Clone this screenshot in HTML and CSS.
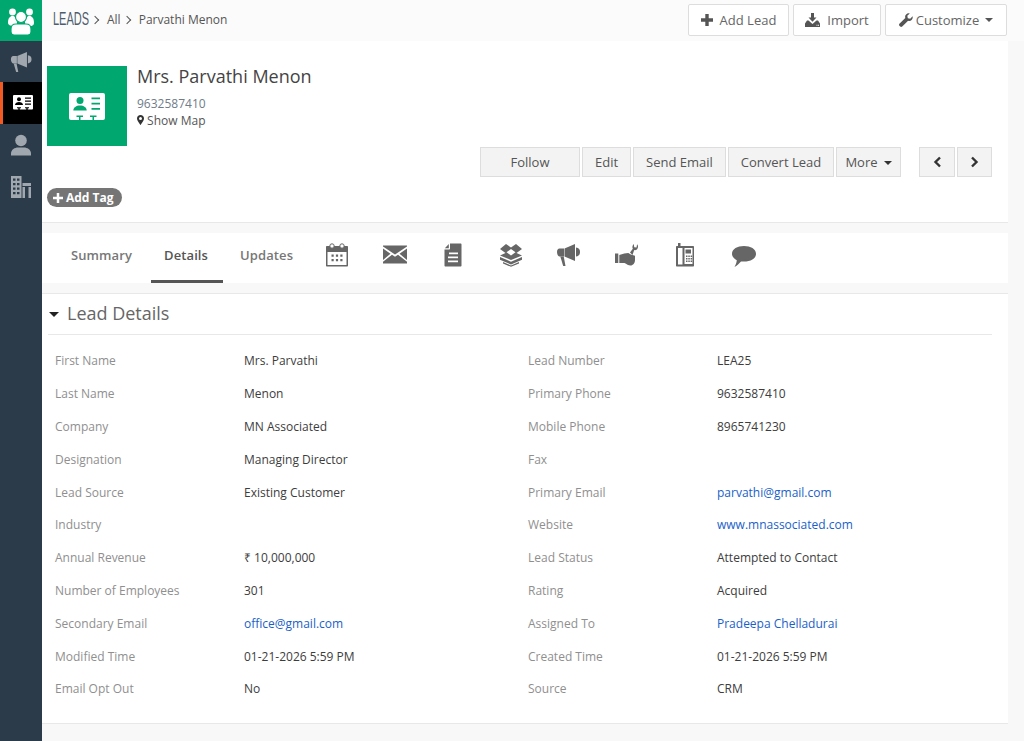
FILE: index.html
```html
<!DOCTYPE html>
<html lang="en">
<head>
<meta charset="utf-8">
<title>Lead Details</title>
<link rel="stylesheet" href="styles.css">
</head>
<body>
<div class="app">
  <nav class="side">
    <div class="side-item logo">
      <svg width="30" height="28" viewBox="0 0 30 28"><g fill="#fff"><circle cx="6.500" cy="5" r="3.400"/><circle cx="23.500" cy="5" r="3.400"/><path d="M2 16c0-5 2-7 4.500-7S11 11 11 16 2 19 2 16zM19 16c0-5 2-7 4.500-7s4.500 2 4.500 7-9 3-9 0z"/><circle cx="15" cy="10" r="5.500" stroke="#00a86f" stroke-width="1.200"/><path d="M5 25v-3c0-3 2-5 5-5h10c3 0 5 2 5 5v3c0 2-1.500 3-3 3H8c-1.500 0-3-1-3-3z" stroke="#00a86f" stroke-width="1.200"/></g></svg>
    </div>
    <div class="side-item">
      <svg width="22" height="22" viewBox="0 0 23 24"><path fill="#a0a7ae" d="M.5 9c0-2 1-3.500 2.500-3.500h4v8H3C1.500 13.500.5 11 .5 9zM7.500 5.500L18 1v17L7.500 13.500zM19 4.500c3 .5 4 2 4 4.500s-1 4-4 4.500z"/><path fill="#a0a7ae" d="M3.500 13.500h3.200L8.500 23H6.200z"/></svg>
    </div>
    <div class="side-item active">
      <svg width="20" height="16" viewBox="0 0 20 16"><rect width="20" height="14.500" rx="1" fill="#fff"/><circle cx="6" cy="4.300" r="2" fill="#000"/><path d="M2 10c0-2 2-3 4-3s4 1 4 3z" fill="#000"/><path d="M12 2.500h6v1.300h-6zM12 5.500h6v1.300h-6zM12 8.500h6v1.300h-6zM4 12.200h4v1.100H4zM12 12.200h4v1.100h-4z" fill="#000"/><path d="M5.300 13h1.400v3H5.300zM13.300 13h1.400v3h-1.400z" fill="#000"/></svg>
    </div>
    <div class="side-item">
      <svg width="22" height="22" viewBox="0 0 22 22"><circle cx="11" cy="6.500" r="5.800" fill="#a0a7ae"/><path d="M1 21.500v-2c0-4 4-6 7-6h6c3 0 7 2 7 6v2z" fill="#a0a7ae"/></svg>
    </div>
    <div class="side-item">
      <svg width="20" height="22" viewBox="0 0 20 22"><path fill-rule="evenodd" fill="#a0a7ae" d="M0 0h10.500v22H0zM2 2.500v2.300h2.500V2.500zm4 0v2.300h2.500V2.500zM2 7v2.300h2.500V7zm4 0v2.300h2.500V7zM2 11.500v2.300h2.500v-2.300zm4 0v2.300h2.500v-2.300zM2 16v2.300h2.500V16zm4 0v2.300h2.500V16z"/><path fill="#a0a7ae" d="M11.500 7H20v3h-8.500zM11.500 11H14v11h-2.500zM17.500 11H20v11h-2.500z"/></svg>
    </div>
  </nav>

  <div class="content">
    <header class="topbar">
      <div class="crumbs">
        <span class="module">LEADS</span>
        <span class="sep"></span>
        <span>All</span>
        <span class="sep"></span>
        <span>Parvathi Menon</span>
      </div>
      <div class="top-actions">
        <button class="top-btn add"><svg class="ic" width="12" height="12" viewBox="0 0 12 12"><path fill="#555" d="M4.300 0h3.400v4.300H12v3.400H7.700V12H4.300V7.700H0V4.300h4.300z"/></svg><span>Add Lead</span></button>
        <button class="top-btn imp"><svg class="ic" width="15" height="14" viewBox="0 0 15 14"><path fill="#555" d="M6 0h3v4.500h2.500L7.500 8.800 3.500 4.500H6z"/><path fill-rule="evenodd" fill="#555" d="M2 7.500h1.500l4 3.500 4-3.500H13l2 3V14H0v-3.500zM11.500 11.800v1h1v-1zm1.500 0v1h1v-1z"/></svg><span>Import</span></button>
        <button class="top-btn cust"><svg class="ic" width="14" height="14" viewBox="0 0 14 14"><path fill="#555" d="M13.600 3.300c.3 1.300 0 2.700-1 3.600-1 1-2.300 1.200-3.500.8L3.200 13.600c-.6.500-1.400.5-2 0l-.8-.8c-.5-.6-.5-1.400 0-2l5.900-5.900c-.4-1.200-.2-2.500.8-3.500 1-1 2.300-1.300 3.600-1L8.300 2.800l.5 2.400 2.400.5z"/></svg><span>Customize</span><i class="caret"></i></button>
      </div>
    </header>

    <div class="page">
      <section class="record">
        <div class="rec-head">
          <div class="avatar">
            <svg width="36" height="27" viewBox="0 0 36 27"><rect width="36" height="27" rx="2" fill="#fff"/><circle cx="11" cy="7.500" r="3.500" fill="#00a86f"/><path d="M4.300 17.500c0-3 3-5 6.700-5s6.700 2 6.700 5z" fill="#00a86f"/><path d="M22.500 4.500H31v1.800h-8.500zM22.500 9.700H31v1.800h-8.500zM22.500 15H31v1.800h-8.500zM7.500 22.500H14v1.500H7.500zM21 22.500h6.500V24H21z" fill="#00a86f"/><path d="M10 23.500h1.500V27H10zM23.500 23.500H25V27h-1.500z" fill="#00a86f"/></svg>
          </div>
          <div class="rec-info">
            <h1 class="rec-name">Mrs. Parvathi Menon</h1>
            <div class="rec-phone">9632587410</div>
            <div class="rec-map"><svg width="7" height="10" viewBox="0 0 7 10"><path fill-rule="evenodd" fill="#333" d="M3.500 0C1.500 0 0 1.500 0 3.400 0 5.500 3.500 10 3.500 10S7 5.500 7 3.400C7 1.500 5.500 0 3.500 0zm0 2a1.500 1.500 0 1 1 0 3 1.500 1.500 0 0 1 0-3z"/></svg> Show Map</div>
          </div>
        </div>
        <div class="rec-actions">
          <button class="act follow">Follow</button>
          <button class="act edit">Edit</button>
          <button class="act mail">Send Email</button>
          <button class="act conv">Convert Lead</button>
          <button class="act more">More<i class="caret dark"></i></button>
          <button class="act nav first"><svg width="9" height="12" viewBox="0 0 9 12"><path fill="none" stroke="#333" stroke-width="2.400" d="M7 1.500L2.500 6 7 10.500"/></svg></button>
          <button class="act nav"><svg width="9" height="12" viewBox="0 0 9 12"><path fill="none" stroke="#333" stroke-width="2.400" d="M2 1.500L6.500 6 2 10.500"/></svg></button>
        </div>
        <div class="tagrow"><span class="tag"><svg width="10" height="10" viewBox="0 0 12 12"><path fill="#fff" d="M4.500 0h3v4.500H12v3H7.500V12h-3V7.500H0v-3h4.500z"/></svg>Add Tag</span></div>
      </section>

      <nav class="tabs">
        <a class="tab">Summary</a>
        <a class="tab current">Details</a>
        <a class="tab">Updates</a>
        <span class="tab-icons">
          <svg width="24" height="24" viewBox="0 0 24 24"><path fill="#666" fill-rule="evenodd" d="M2 3h20c.6 0 1 .4 1 1v18.500c0 .6-.4 1-1 1H2c-.6 0-1-.4-1-1V4c0-.6.4-1 1-1zm.5 6v13h19V9zM6.500 11.500h2.200v2.200H6.500zm4.400 0h2.200v2.200h-2.200zm4.400 0h2.200v2.200h-2.200zM6.500 16h2.200v2.200H6.500zm4.400 0h2.200v2.200h-2.200zm4.400 0h2.200v2.200h-2.200z"/><circle cx="7" cy="3" r="2.200" fill="#fff" stroke="#666"/><circle cx="17" cy="3" r="2.200" fill="#fff" stroke="#666"/></svg>
          <svg width="24" height="24" viewBox="0 1.500 24 24"><path fill="#666" d="M0 4h24v1L12 13 0 5zM0 7l7.500 5.200L0 18.500zM24 7v11.500l-7.500-6.300zM9 13.300l3 2 3-2 9 7V22H0v-1.700z"/></svg>
          <svg width="24" height="24" viewBox="0 0 24 24"><path fill="#666" fill-rule="evenodd" d="M9 .5h10.500c.6 0 1 .4 1 1v21c0 .6-.4 1-1 1H4.500c-.6 0-1-.4-1-1V6.500H8c.6 0 1-.4 1-1zM8 9.500v1.800h9V9.500zm-1 4v1.800h10v-1.800zm0 4v1.800h10v-1.800z"/><path fill="#666" d="M3.800 5.300L7.800 1v4.300z"/></svg>
          <svg width="24" height="24" viewBox="0 0 24 24"><path fill="#666" fill-rule="evenodd" d="M1 6L7 1l5 3.500L17 1l6 5-5.500 4 5.500 2.500L12 17 1 12.500 6.500 10zM12 6L7.500 9.300 12 12.500l4.500-3.200z"/><path fill="#666" d="M1 14l11 4.800L23 14v2.800l-11 4.600L1 16.800z"/><path fill="#666" d="M4 19l8 3.500 8-3.500v1.500l-8 3.300-8-3.300z"/></svg>
          <svg width="24" height="24" viewBox="0 0 24 24"><path fill="#666" d="M0 9c0-2 1-3.500 2.500-3.500H7v8H2.500C1 13.500 0 11 0 9zM7.500 5.500L18 1v17L7.500 13.500zM19 4.500c3 .5 4 2 4 4.500s-1 4-4 4.500z"/><path fill="#666" d="M3.300 13.500h3.400l1.800 9.500H6.200z"/></svg>
          <svg width="24" height="24" viewBox="0 0 24 24"><path fill="#666" d="M0 10.500h3.300V20H0zM4.300 12l5-1.500 4-.5 2.500 1.500 4.200 1.200v4.300c0 3-2 5.500-4.500 5.500-2 0-4-1.500-6-2.500H4.300z"/><path fill-rule="evenodd" fill="#666" d="M15 9.500l2.800-3.800c-.8-1.500-.3-3.500 1-4.700l.4 3.200 2.300.3.600-3.300c1.300 1.200 1.200 3.500 0 5-.7.800-1.800 1.100-2.900.9L17.500 12z"/></svg>
          <svg width="24" height="24" viewBox="-3 0 24 24"><path fill="#666" fill-rule="evenodd" d="M2 0h2.500v3H17c.6 0 1 .4 1 1v18.500c0 .6-.4 1-1 1H1c-.6 0-1-.4-1-1V4c0-.6.4-1 1-1h1zM2 5v16.500h4.500V5zM8.500 5v16h8V5zm1 1.500h5.500v4H9.500zM10 12.500h1.500V14H10zm2.300 0h1.500V14h-1.500zm2.300 0h1.500V14h-1.500zM10 15h1.500v1.500H10zm2.300 0h1.500v1.500h-1.500zm2.300 0h1.500v1.500h-1.500zM10 17.500h1.500V19H10zm2.300 0h1.500V19h-1.500zm2.300 0h1.500V19h-1.500z"/></svg>
          <svg width="26" height="24" viewBox="0 0 26 24"><path fill="#666" d="M13 3c6.600 0 12 3 12 7.800S19.600 18.600 13 18.600c-1 0-2 0-3-.2C8.500 20 6.500 22.500 3.500 24c1-1.800 2-4 2.300-6.700C3 15.800 1 13.500 1 10.800 1 6 6.400 3 13 3z"/></svg>
        </span>
      </nav>

      <section class="details">
        <h2 class="det-title"><i class="caret big"></i>Lead Details</h2>
        <div class="grid">
          <span class="lbl">First Name</span><span class="val">Mrs. Parvathi</span><span class="lbl">Lead Number</span><span class="val">LEA25</span>
          <span class="lbl">Last Name</span><span class="val">Menon</span><span class="lbl">Primary Phone</span><span class="val">9632587410</span>
          <span class="lbl">Company</span><span class="val">MN Associated</span><span class="lbl">Mobile Phone</span><span class="val">8965741230</span>
          <span class="lbl">Designation</span><span class="val">Managing Director</span><span class="lbl">Fax</span><span class="val"></span>
          <span class="lbl">Lead Source</span><span class="val">Existing Customer</span><span class="lbl">Primary Email</span><span class="val link">parvathi@gmail.com</span>
          <span class="lbl">Industry</span><span class="val"></span><span class="lbl">Website</span><span class="val link">www.mnassociated.com</span>
          <span class="lbl">Annual Revenue</span><span class="val">₹ 10,000,000</span><span class="lbl">Lead Status</span><span class="val">Attempted to Contact</span>
          <span class="lbl">Number of Employees</span><span class="val">301</span><span class="lbl">Rating</span><span class="val">Acquired</span>
          <span class="lbl">Secondary Email</span><span class="val link">office@gmail.com</span><span class="lbl">Assigned To</span><span class="val link">Pradeepa Chelladurai</span>
          <span class="lbl">Modified Time</span><span class="val">01-21-2026 5:59 PM</span><span class="lbl">Created Time</span><span class="val">01-21-2026 5:59 PM</span>
          <span class="lbl">Email Opt Out</span><span class="val">No</span><span class="lbl">Source</span><span class="val">CRM</span>
        </div>
      </section>
    </div>
  </div>
</div>
</body>
</html>
```

FILE: styles.css
```css
* { box-sizing: border-box; }
html, body { margin: 0; height: 100%; overflow: hidden; }
body { font-family: "Open Sans", sans-serif; font-size: 12px; color: #333; background: #f8f8f8; }
.app { display: flex; height: 741px; }

.side { width: 42px; flex: none; background: #2c3b49; }
.side-item { height: 41px; display: flex; align-items: center; justify-content: center; }
.side-item.logo { background: #00a86f; }
.side-item.active { height: 42px; background: #000; border-left: 3px solid #f15a22; padding-right: 0; }
.side-item.active + .side-item { height: 42px; }

.content { flex: 1; min-width: 0; display: flex; flex-direction: column; }
.topbar { height: 41px; flex: none; background: #fbfbfb; display: flex; justify-content: space-between; padding: 4px 17px 0 11px; }
.crumbs { display: flex; align-items: center; height: 31px; font-size: 12px; color: #555; }
.module { font-family: "Liberation Sans", sans-serif; font-size: 18px; color: #4d5d6e; transform: scaleX(.61); transform-origin: left center; width: 36px; white-space: nowrap; }
.sep { width: 6px; height: 6px; border-top: 1px solid #555; border-right: 1px solid #555; transform: rotate(45deg); margin: 0 9px 0 3px; }
.top-actions { display: flex; gap: 4px; }
.top-btn { height: 32px; background: #fff; border: 1px solid #ddd; border-radius: 2px; font: 13px "Open Sans", sans-serif; color: #666; display: flex; align-items: center; padding: 0; justify-content: center; }
.top-btn .ic { margin-right: 7px; }
.top-btn.add { width: 101px; }
.top-btn.imp { width: 88px; }
.top-btn.cust { width: 122px; }
.top-btn.cust .ic { margin-right: 3px; }
.caret { display: inline-block; width: 0; height: 0; border-left: 4px solid transparent; border-right: 4px solid transparent; border-top: 4px solid #555; margin-left: 6px; vertical-align: middle; }
.caret.dark { border-top-color: #333; margin: 2px 0 0 6px; }
.caret.big { border-left-width: 5px; border-right-width: 5px; border-top: 5px solid #222; margin: 3px 8px 0 1px; }

.page { flex: 1; width: 966px; display: flex; flex-direction: column; gap: 10px; }
.record { height: 182px; background: #fff; border-bottom: 1px solid #e8e8e8; padding: 25px 16px 0 5px; }
.rec-head { display: flex; gap: 10px; height: 80px; }
.avatar { width: 80px; height: 80px; background: #00a86f; display: flex; align-items: center; justify-content: center; }
.rec-info { margin-top: -1px; }
.rec-name { margin: 0; font-size: 18px; font-weight: 400; line-height: 22px; color: #444; }
.rec-phone { margin-top: 8px; color: #707c88; line-height: 17px; }
.rec-map { line-height: 17px; color: #555; }
.rec-actions { display: flex; justify-content: flex-end; gap: 2px; margin-top: 1px; }
.act { height: 30px; background: #f3f3f3; border: 1px solid #ddd; font: 13px "Open Sans", sans-serif; color: #555; padding: 0; display: flex; align-items: center; justify-content: center; }
.act.follow { width: 100px; }
.act.edit { width: 49px; }
.act.mail { width: 93px; }
.act.conv { width: 106px; }
.act.more { width: 65px; }
.act.nav { width: 35px; }
.act.nav.first { width: 36px; margin-left: 16px; }
.tagrow { margin-top: 11px; }
.tag { display: inline-flex; align-items: center; gap: 3px; height: 19px; padding: 0 8px 0 6px; border-radius: 10px; background: #757575; color: #fff; font-weight: 700; font-size: 12px; }

.tabs { height: 50px; background: #fff; display: flex; padding-left: 13px; flex: none; }
.tab { height: 50px; padding: 0 16px 6px; display: flex; align-items: center; font-size: 13px; font-weight: 600; color: #777; letter-spacing: .1px; }
.tab.current { color: #555; border-bottom: 3px solid #555; padding: 0 15px 3px 13px; margin: 0 1px 0 3px; }
.tab-icons { display: flex; align-items: center; gap: 34px; margin-left: 16px; padding-bottom: 6px; }

.details { height: 431px; background: #fff; border-top: 1px solid #e8e8e8; border-bottom: 1px solid #e8e8e8; padding: 0 16px 0 6px; }
.det-title { margin: 0; height: 41px; border-bottom: 1px solid #e8e8e8; display: flex; align-items: center; font-size: 18px; font-weight: 400; color: #666; padding-bottom: 2px; }
.grid { display: grid; grid-template-columns: 189px 284px 189px 1fr; grid-auto-rows: 32.800px; padding: 10.400px 0 0 7px; line-height: 32px; }
.lbl { color: #8f8f8f; }
.val { color: #3d3d3d; }
.val.link { color: #1a5fc8; }
```
